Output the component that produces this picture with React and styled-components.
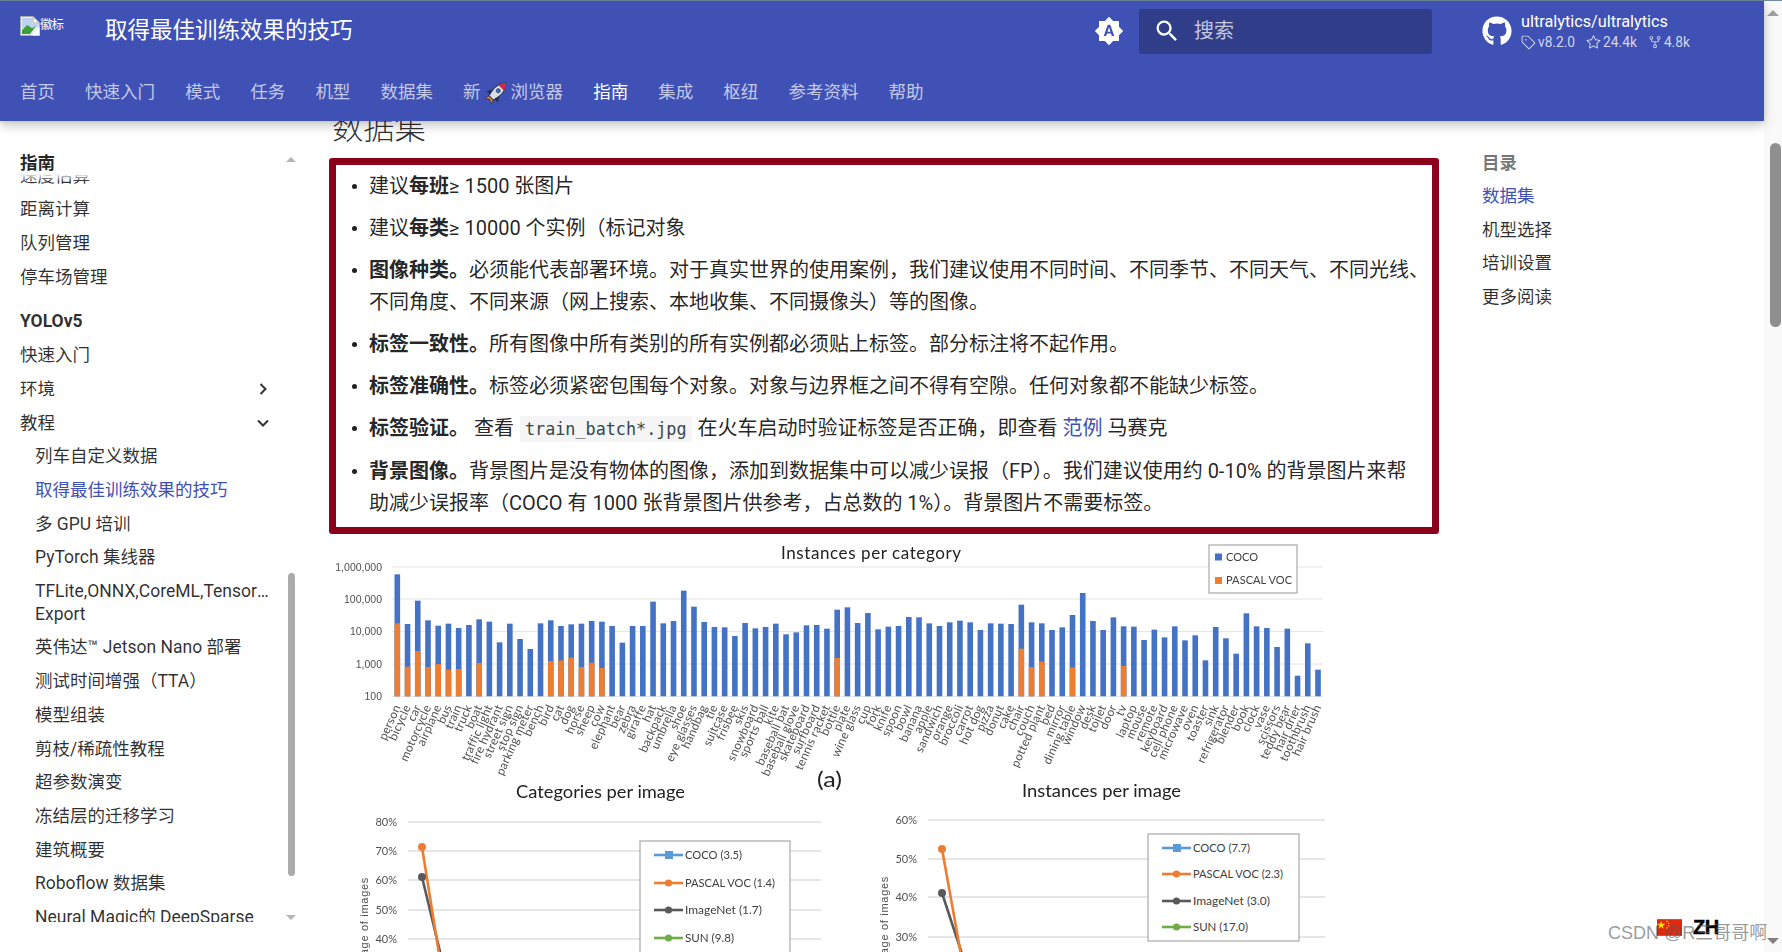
import React from 'react';
import styled, { createGlobalStyle } from 'styled-components';
import { FaGithub } from 'react-icons/fa';
import { GoTag, GoStar, GoRepoForked } from 'react-icons/go';

const UI = `Roboto, "Noto Sans CJK SC", sans-serif`;

const Global = createGlobalStyle`
  * { box-sizing: border-box; }
  html, body { margin: 0; padding: 0; background: #fff; overflow: hidden; }
  body { font-family: ${UI}; color: rgba(0,0,0,.87); }
`;

const Page = styled.div`
  position: relative; width: 1782px; height: 952px; overflow: hidden;
  display: flex; flex-direction: column; background: #fff;
`;
const TopStrip = styled.div`height: 1px; flex: none; background: #6f8b9c;`;
const Frame = styled.div`flex: 1; display: flex; min-height: 0;`;
const Viewport = styled.div`flex: 1; min-width: 0; display: flex; flex-direction: column;`;

const Header = styled.header`
  flex: none; height: 120px; background: #3f51b5; color: #fff; position: relative; z-index: 3;
  box-shadow: 0 0 5px rgba(0,0,0,.1), 0 5px 10px rgba(0,0,0,.2);
`;
const HeaderRow = styled.div`height: 60px; display: flex; align-items: center;`;
const Logo = styled.div`
  width: 105px; height: 60px; flex: none; padding: 15px 0 0 20px; display: flex; align-items: flex-start;
`;
const LogoAlt = styled.span`font-size: 12.5px; line-height: 16px; letter-spacing: -1px; margin: 1px 0 0 0;`;
const Title = styled.div`flex: 1; font-size: 22.5px; line-height: 1; margin-top: -1px; white-space: nowrap;`;
const ThemeButton = styled.div`width: 30px; height: 30px; margin-right: 15px; flex: none;
  svg { display: block; fill: #fff; }
`;
const Search = styled.div`
  width: 293px; height: 45px; margin-right: 50px; flex: none; border-radius: 3px; background: #303d89;
  display: flex; align-items: center; padding-left: 14px; gap: 13px;
  svg { fill: #fff; flex: none; }
`;
const Placeholder = styled.span`font-size: 20px; line-height: 24px; color: rgba(255,255,255,.72); margin-top: -1px;`;
const Repo = styled.div`width: 282px; flex: none; display: flex; align-items: center; gap: 9px;`;
const RepoText = styled.div`display: flex; flex-direction: column; margin-top: 1px;`;
const RepoName = styled.div`font-size: 16.25px; line-height: 20px; white-space: nowrap;`;
const Facts = styled.div`display: flex; align-items: center; font-size: 13.75px; line-height: 18px; color: rgba(255,255,255,.78); margin-top: 1px;`;
const Fact = styled.span`display: inline-flex; align-items: center; gap: 2px; margin-right: 11px; svg { flex: none; }`;

const Tabs = styled.nav`height: 60px; display: flex; align-items: center; gap: 30.1px; padding: 4px 0 0 20px;`;
const Tab = styled.a`
  font-size: 17.5px; line-height: 1; display: inline-flex; align-items: center; gap: 4px; white-space: nowrap;
  color: ${p => (p.$active ? '#fff' : 'rgba(255,255,255,.7)')};
  svg { overflow: visible; }
`;

const Body = styled.div`flex: 1; min-height: 0; display: flex; overflow: hidden;`;

const Sidebar = styled.aside`position: relative; width: 330px; flex: none; padding: 31px 0 0 20px; font-size: 17.5px;`;
const SideTitle = styled.div`height: 20px; line-height: 22.8px; font-weight: 700;`;
const SideScroll = styled.div`position: relative; height: 750px; overflow: hidden; width: 262px;`;
const SideFade = styled.div`position: absolute; left: 0; right: 0; top: 0; height: 9px; z-index: 1;
  background: linear-gradient(to bottom, #fff 20%, rgba(255,255,255,0));`;
const SideList = styled.ul`list-style: none; margin: -18.3px 0 0; padding: 0;`;
const SideItem = styled.li`
  display: flex; justify-content: space-between; align-items: center;
  line-height: 22.8px; margin-top: 10.9px;
  padding-left: ${p => (p.$nested ? '15px' : '0')};
  font-weight: ${p => (p.$section ? 700 : 400)};
  color: ${p => (p.$active ? '#4051b5' : 'rgba(0,0,0,.82)')};
  ${p => p.$section && 'margin-top: 22px;'}
  svg { flex: none; margin-right: 12px; }
`;
const Clip = styled.div`display: block; width: 235px; overflow: hidden; white-space: nowrap; text-overflow: ellipsis;`;
const ScrollArrow = styled.div`
  position: absolute; left: ${p => p.$x}px; top: ${p => p.$y}px; width: 0; height: 0;
  border-left: ${p => p.$w}px solid transparent; border-right: ${p => p.$w}px solid transparent;
  ${p => (p.$down ? `border-top: ${p.$h}px solid ${p.$c};` : `border-bottom: ${p.$h}px solid ${p.$c};`)}
`;
const SideThumb = styled.div`position: absolute; left: 288px; top: 452px; width: 7px; height: 303px; border-radius: 4px; background: #ababab;`;

const Main = styled.main`width: 1152px; flex: none; min-width: 0;`;
const Heading = styled.h2`
  font-size: 31.25px; font-weight: 300; line-height: 43.75px; margin: -14px 0 7.25px 2px; color: rgba(0,0,0,.82);
`;
const RedBox = styled.div`
  width: 1110px; margin-left: -1px; height: 376px; border: 7px solid #8b001b; border-radius: 3px; padding: 5px 0 0 33px;
  font-size: 20px; line-height: 32px;
`;
const List = styled.ul`margin: 0; padding: 0; list-style: none;`;
const Bullet = styled.li`
  position: relative; margin-bottom: 10px;
  &::before { content: ''; position: absolute; left: -17px; top: 14px; width: 5px; height: 5px; border-radius: 50%; background: rgba(0,0,0,.87); }
  strong { font-weight: 700; }
`;
const Code = styled.code`
  font-family: "DejaVu Sans Mono", monospace; font-size: 16.8px; background: #f5f5f5; color: #36464e;
  border-radius: 2px; padding: 3px 5px; margin: 0 1px;
`;
const Link = styled.a`color: #4051b5;`;

const ChartSvg = styled.svg`
  display: block; margin-top: 1px; filter: blur(.25px);
  text { font-family: Lato, "Liberation Sans", sans-serif; fill: #505050; }
`;

const Toc = styled.aside`flex: 1; padding: 31px 0 0 0; font-size: 17.5px;`;
const TocTitle = styled.div`line-height: 22.8px; margin-bottom: -1px; font-weight: 700; color: rgba(0,0,0,.55);`;
const TocItem = styled.div`line-height: 22.8px; margin-top: 11px; color: ${p => (p.$active ? '#4051b5' : 'rgba(0,0,0,.82)')};`;

const PageBar = styled.div`position: relative; width: 18px; flex: none; background: #f9f9f9;`;
const PageThumb = styled.div`position: absolute; left: 6px; top: 142px; width: 11px; height: 184px; border-radius: 6px; background: #8f8f8f;`;

const LangPicker = styled.div`position: absolute; left: 1657px; top: 918px; display: flex; align-items: center; gap: 11px;`;
const LangCode = styled.span`font: 900 20px/1 "Liberation Sans", sans-serif; color: #000; letter-spacing: -.5px; margin-top: -1px; -webkit-text-stroke: .5px #000;`;
const Watermark = styled.div`
  position: absolute; left: 1608px; top: 921px; font-family: "Liberation Sans", "Noto Sans CJK SC", sans-serif;
  font-size: 18px; line-height: 24px; color: rgba(90,90,90,.62); white-space: nowrap;
`;

const tabs = ['首页', '快速入门', '模式', '任务', '机型', '数据集'];
const tabs2 = ['集成', '枢纽', '参考资料', '帮助'];

const Rocket = () => (
  <svg width="22" height="22" viewBox="0 0 21 21">
    <g transform="rotate(45 10.5 10.5)">
      <path d="M8.3 16 L6 21.5 L10.5 19 L15 21.5 L12.7 16 Z" fill="#f08a2c" stroke="#27304f" strokeWidth=".7" />
      <path d="M10.5 -3 C14 0.5 15 4.5 15 8 C15 11 14.2 14 13.5 17 H7.5 C6.8 14 6 11 6 8 C6 4.5 7 0.5 10.5 -3 Z" fill="#d7dde6" stroke="#27304f" strokeWidth=".9" />
      <path d="M10.5 -3 C12.5 -1 13.8 1.2 14.4 3.5 H6.6 C7.2 1.2 8.5 -1 10.5 -3 Z" fill="#c92f4b" />
      <circle cx="10.5" cy="7.5" r="2" fill="#3a6fb5" stroke="#27304f" strokeWidth=".6" />
      <path d="M6 10 L2.8 16 L7.4 15.5 Z M15 10 L18.2 16 L13.6 15.5 Z" fill="#27304f" />
    </g>
  </svg>
);

const BrokenImage = () => (
  <svg width="20" height="20" viewBox="0 0 20 20" style={{ flex: 'none' }}>
    <path d="M.5.5H13L19.5 7V19.5H.5Z" fill="#e9eef5" stroke="#a9a9a9" />
    <path d="M13 .5V7H19.5Z" fill="#fff" stroke="#a9a9a9" />
    <path d="M2 2H12V8H18V11L2 12Z" fill="#bcd3ef" />
    <path d="M2 18V14L7 9L12 12L16 10L10 18Z" fill="#3f9e3c" />
    <path d="M12 19.5L19.5 11V19.5Z" fill="#fff" />
  </svg>
);

const Chev = ({ d }) => (
  <svg width="14" height="14" viewBox="0 0 14 14" fill="none" stroke="#333" strokeWidth="2">
    <path d={d} />
  </svg>
);

const bars = `person:118:265 bicycle:267:395 car:197:348 motorcycle:256:396 airplane:272:387 bus:266:404 train:279:402 truck:270 boat:253:384 traffic_light:260 fire_hydrant:322 street_sign:266 stop_sign:312 parking_meter:342 bench:265 bird:256:378 cat:273:376 dog:268:368 horse:266:396 sheep:258:383 cow:260:399 elephant:273 bear:323 zebra:273 giraffe:273 hat:200 backpack:265 umbrella:258 shoe:167 eye_glasses:215 handbag:261 tie:276 suitcase:277 frisbee:303 skis:264 snowboard:280 sports_ball:276 kite:266 baseball_bat:298 baseball_glove:292 skateboard:271 surfboard:270 tennis_racket:281 bottle:224:369 plate:217 wine_glass:264 cup:234 fork:283 knife:275 spoon:273 bowl:246 banana:247 apple:265 sandwich:273 orange:262 broccoli:257 carrot:262 hot_dog:285 pizza:265 donut:266 cake:267 chair:209:341 couch:262:396 potted_plant:265:380 bed:285 mirror:277 dining_table:240:397 window:174 desk:258 toilet:285 door:247 tv:274:393 laptop:275 mouse:315 remote:284 keyboard:307 cell_phone:274 microwave:316 oven:301 toaster:376 sink:276 refrigerator:310 blender:356 book:235 clock:274 vase:279 scissors:336 teddy_bear:281 hair_drier:422 toothbrush:325 hair_brush:404`
  .split(' ')
  .map(s => {
    const [n, b, o] = s.split(':');
    return { name: n.replace('_', ' '), blue: 535 + b / 3, orange: o ? 535 + o / 3 : null };
  });

const BASE = 696.3;
const gridY = [[567, '1,000,000'], [599, '100,000'], [631.6, '10,000'], [664, '1,000'], [696.3, '100']];

const LegendLine = ({ x, y, color, label, len, square }) => (
  <g>
    <line x1={x} x2={x + 29} y1={y} y2={y} stroke={color} strokeWidth="2.6" />
    {square
      ? <rect x={x + 11} y={y - 4} width="8" height="8" fill={color} />
      : <circle cx={x + 14.5} cy={y} r="3.6" fill={color} />}
    <text x={x + 31} y={y + 4} fontSize="11" textLength={len} lengthAdjust="spacingAndGlyphs" style={{ fill: '#404040' }}>{label}</text>
  </g>
);

const Chart = () => (
  <ChartSvg width="1000" height="417" viewBox="330 535 1000 417">
    <text x="781" y="559" fontSize="17" textLength="180" style={{ fill: '#222' }}>Instances per category</text>
    {gridY.map(([y, t]) => (
      <g key={t}>
        <line x1="392" x2="1323" y1={y} y2={y} stroke="#e4e4e4" strokeWidth="1" />
        <text x="382" y={y + 3.5} fontSize="10.5" textAnchor="end" style={{ fontFamily: '"Liberation Sans"' }}>{t}</text>
      </g>
    ))}
    {bars.map((b, i) => {
      const x = 397.3 + i * 10.23;
      return (
        <g key={b.name}>
          <rect x={x - 2.8} y={b.blue} width="5.6" height={BASE - b.blue} fill="#4472c4" />
          {b.orange && <rect x={x - 2.8} y={b.orange} width="5.6" height={BASE - b.orange} fill="#ed7d31" />}
          <text x={x + 3.5} y="707" fontSize="12" letterSpacing=".2" textAnchor="end" transform={`rotate(-66 ${x + 3.5} 707)`}>{b.name}</text>
        </g>
      );
    })}
    <rect x="1209" y="545" width="88" height="48" fill="#fff" stroke="#a9a9a9" strokeWidth="1.2" />
    <rect x="1215" y="553.5" width="7" height="7" fill="#4472c4" />
    <text x="1226" y="561" fontSize="11" style={{ fill: '#404040' }}>COCO</text>
    <rect x="1215" y="577" width="7" height="7" fill="#ed7d31" />
    <text x="1226" y="584" fontSize="11" textLength="66" style={{ fill: '#404040' }}>PASCAL VOC</text>

    <text x="817" y="787" fontSize="22" textLength="25" lengthAdjust="spacingAndGlyphs" style={{ fill: '#222' }}>(a)</text>
    <text x="516" y="798" fontSize="17" textLength="169" lengthAdjust="spacingAndGlyphs" style={{ fill: '#222' }}>Categories per image</text>
    <text x="1022" y="797" fontSize="17" textLength="159" lengthAdjust="spacingAndGlyphs" style={{ fill: '#222' }}>Instances per image</text>

    {[[822, '80%'], [851, '70%'], [880, '60%'], [910, '50%'], [939, '40%']].map(([y, t]) => (
      <g key={t}>
        <line x1="408" x2="821" y1={y} y2={y} stroke="#e6e6e6" strokeWidth="2" />
        <text x="397" y={y + 4} fontSize="11" textAnchor="end">{t}</text>
      </g>
    ))}
    <text x="368" y="877" fontSize="11" letterSpacing=".7" textAnchor="end" transform="rotate(-90 368 877)" style={{ fontFamily: '"Liberation Sans"' }}>Percentage of images</text>
    <line x1="422" y1="877" x2="442" y2="960" stroke="#595959" strokeWidth="2.6" />
    <line x1="422" y1="847" x2="440" y2="960" stroke="#ed7d31" strokeWidth="2.6" />
    <circle cx="422" cy="877" r="4" fill="#595959" />
    <circle cx="422" cy="847" r="4" fill="#ed7d31" />
    <rect x="640" y="841" width="150" height="120" fill="#fff" stroke="#a9a9a9" strokeWidth="1.2" />
    <LegendLine x={654} y={855} color="#5b9bd5" label="COCO (3.5)" len={57} square />
    <LegendLine x={654} y={883} color="#ed7d31" label="PASCAL VOC (1.4)" len={90} />
    <LegendLine x={654} y={910} color="#595959" label="ImageNet (1.7)" len={77} />
    <LegendLine x={654} y={938} color="#70ad47" label="SUN (9.8)" len={49} />

    {[[820, '60%'], [859, '50%'], [897, '40%'], [937, '30%']].map(([y, t]) => (
      <g key={t}>
        <line x1="928" x2="1325" y1={y} y2={y} stroke="#e6e6e6" strokeWidth="2" />
        <text x="917" y={y + 4} fontSize="11" textAnchor="end">{t}</text>
      </g>
    ))}
    <text x="888" y="876" fontSize="11" letterSpacing=".7" textAnchor="end" transform="rotate(-90 888 876)" style={{ fontFamily: '"Liberation Sans"' }}>Percentage of images</text>
    <line x1="942" y1="893" x2="964" y2="960" stroke="#595959" strokeWidth="2.6" />
    <line x1="942" y1="849" x2="962" y2="960" stroke="#ed7d31" strokeWidth="2.6" />
    <circle cx="942" cy="893" r="4" fill="#595959" />
    <circle cx="942" cy="849" r="4" fill="#ed7d31" />
    <rect x="1148" y="834" width="151" height="107" fill="#fff" stroke="#a9a9a9" strokeWidth="1.2" />
    <LegendLine x={1162} y={848} color="#5b9bd5" label="COCO (7.7)" len={57} square />
    <LegendLine x={1162} y={874} color="#ed7d31" label="PASCAL VOC (2.3)" len={90} />
    <LegendLine x={1162} y={901} color="#595959" label="ImageNet (3.0)" len={77} />
    <LegendLine x={1162} y={927} color="#70ad47" label="SUN (17.0)" len={55} />
  </ChartSvg>
);

const Flag = () => (
  <svg width="25" height="19" viewBox="0 0 30 20">
    <rect width="30" height="20" fill="#de2910" />
    <polygon points="5,2 6.2,5.6 10,5.6 7,7.8 8.1,11.4 5,9.2 1.9,11.4 3,7.8 0,5.6 3.8,5.6" fill="#ffde00" />
    <circle cx="12" cy="2.5" r=".9" fill="#ffde00" /><circle cx="14" cy="5" r=".9" fill="#ffde00" />
    <circle cx="14" cy="8" r=".9" fill="#ffde00" /><circle cx="12" cy="10.5" r=".9" fill="#ffde00" />
  </svg>
);

const nested = ['列车自定义数据', '取得最佳训练效果的技巧', '多 GPU 培训', 'PyTorch 集线器'];
const nested2 = ['英伟达™ Jetson Nano 部署', '测试时间增强（TTA）', '模型组装', '剪枝/稀疏性教程', '超参数演变', '冻结层的迁移学习', '建筑概要', 'Roboflow 数据集', 'Neural Magic的 DeepSparse'];

export default function App() {
  return (
    <Page>
      <Global />
      <TopStrip />
      <Frame>
        <Viewport>
          <Header>
            <HeaderRow>
              <Logo><BrokenImage /><LogoAlt>徽标</LogoAlt></Logo>
              <Title>取得最佳训练效果的技巧</Title>
              <ThemeButton>
                <svg width="30" height="30" viewBox="0 0 24 24"><path d="M14.3 16L13.6 14H10.4L9.7 16H7.8L11 7H13L16.2 16H14.3M20 8.69V4H15.31L12 .69L8.69 4H4V8.69L.69 12L4 15.31V20H8.69L12 23.31L15.31 20H20V15.31L23.31 12L20 8.69M10.85 12.65H13.15L12 9L10.85 12.65Z" /></svg>
              </ThemeButton>
              <Search>
                <svg width="28" height="28" viewBox="0 0 24 24"><path d="M9.5 3A6.5 6.5 0 0 1 16 9.5c0 1.61-.59 3.09-1.56 4.23l.27.27h.79l5 5-1.5 1.5-5-5v-.79l-.27-.27A6.516 6.516 0 0 1 9.5 16 6.5 6.5 0 0 1 3 9.5 6.5 6.5 0 0 1 9.5 3m0 2C7 5 5 7 5 9.5S7 14 9.5 14 14 12 14 9.5 12 5 9.5 5Z" /></svg>
                <Placeholder>搜索</Placeholder>
              </Search>
              <Repo>
                <FaGithub size={30} />
                <RepoText>
                  <RepoName>ultralytics/ultralytics</RepoName>
                  <Facts>
                    <Fact><GoTag size={15} />v8.2.0</Fact>
                    <Fact><GoStar size={15} />24.4k</Fact>
                    <Fact><GoRepoForked size={14} />4.8k</Fact>
                  </Facts>
                </RepoText>
              </Repo>
            </HeaderRow>
            <Tabs>
              {tabs.map(t => <Tab key={t}>{t}</Tab>)}
              <Tab>新 <Rocket /> 浏览器</Tab>
              <Tab $active>指南</Tab>
              {tabs2.map(t => <Tab key={t}>{t}</Tab>)}
            </Tabs>
          </Header>
          <Body>
            <Sidebar>
              <SideTitle>指南</SideTitle>
              <SideScroll>
                <SideFade />
                <SideList>
                  <SideItem>速度估算</SideItem>
                  <SideItem>距离计算</SideItem>
                  <SideItem>队列管理</SideItem>
                  <SideItem>停车场管理</SideItem>
                  <SideItem $section>YOLOv5</SideItem>
                  <SideItem>快速入门</SideItem>
                  <SideItem>环境<Chev d="M4.5 2L9.5 7L4.5 12" /></SideItem>
                  <SideItem>教程<Chev d="M2 4.5L7 9.5L12 4.5" /></SideItem>
                  {nested.map((t, i) => <SideItem key={t} $nested $active={i === 1}>{t}</SideItem>)}
                  <SideItem $nested>
                    <div>
                      <Clip>TFLite,ONNX,CoreML,TensorFlow</Clip>
                      <div>Export</div>
                    </div>
                  </SideItem>
                  {nested2.map(t => <SideItem key={t} $nested>{t}</SideItem>)}
                </SideList>
              </SideScroll>
              <ScrollArrow $x={286} $y={36} $w={5} $h={5} $c="#b5b5b5" />
              <SideThumb />
              <ScrollArrow $x={286} $y={794} $w={5} $h={5} $c="#b5b5b5" $down />
            </Sidebar>
            <Main>
              <Heading>数据集</Heading>
              <RedBox>
                <List>
                  <Bullet>建议<strong>每班</strong>≥ 1500 张图片</Bullet>
                  <Bullet>建议<strong>每类</strong>≥ 10000 个实例（标记对象</Bullet>
                  <Bullet><strong>图像种类。</strong>必须能代表部署环境。对于真实世界的使用案例，我们建议使用不同时间、不同季节、不同天气、不同光线、不同角度、不同来源（网上搜索、本地收集、不同摄像头）等的图像。</Bullet>
                  <Bullet><strong>标签一致性。</strong>所有图像中所有类别的所有实例都必须贴上标签。部分标注将不起作用。</Bullet>
                  <Bullet><strong>标签准确性。</strong>标签必须紧密包围每个对象。对象与边界框之间不得有空隙。任何对象都不能缺少标签。</Bullet>
                  <Bullet><strong>标签验证。</strong> 查看 <Code>train_batch*.jpg</Code> 在火车启动时验证标签是否正确，即查看 <Link>范例</Link> 马赛克</Bullet>
                  <Bullet><strong>背景图像。</strong>背景图片是没有物体的图像，添加到数据集中可以减少误报（FP）。我们建议使用约 0-10% 的背景图片来帮<br />助减少误报率（COCO 有 1000 张背景图片供参考，占总数的 1%）。背景图片不需要标签。</Bullet>
                </List>
              </RedBox>
              <Chart />
            </Main>
            <Toc>
              <TocTitle>目录</TocTitle>
              <TocItem $active>数据集</TocItem>
              <TocItem>机型选择</TocItem>
              <TocItem>培训设置</TocItem>
              <TocItem>更多阅读</TocItem>
            </Toc>
          </Body>
        </Viewport>
        <PageBar>
          <ScrollArrow $x={3} $y={9} $w={6.5} $h={6} $c="#a0a0a0" />
          <PageThumb />
          <ScrollArrow $x={3} $y={937} $w={6.5} $h={6} $c="#808080" $down />
        </PageBar>
      </Frame>
      <LangPicker><Flag /><LangCode>ZH</LangCode></LangPicker>
      <Watermark>CSDN @R三哥哥啊</Watermark>
    </Page>
  );
}
